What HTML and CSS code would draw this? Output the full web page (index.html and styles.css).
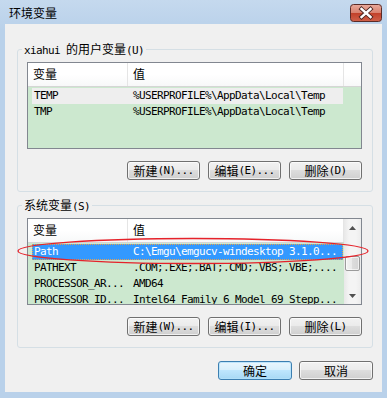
FILE: index.html
```html
<!DOCTYPE html>
<html lang="zh-CN">
<head>
<meta charset="utf-8">
<title>环境变量</title>
<link rel="stylesheet" href="styles.css">
</head>
<body>
<div class="window">
  <div class="titlebar">
    <span class="title">环境变量</span>
    <svg class="close" width="32" height="18" viewBox="0 0 32 18">
      <defs>
        <linearGradient id="cg" x1="0" y1="0" x2="0" y2="1">
          <stop offset="0" stop-color="#e9aa9c"/>
          <stop offset="0.48" stop-color="#d9826f"/>
          <stop offset="0.52" stop-color="#c2412a"/>
          <stop offset="1" stop-color="#d0614a"/>
        </linearGradient>
      </defs>
      <rect x="0.5" y="0.5" width="31" height="17" rx="3" fill="url(#cg)" stroke="#5a2b27"/>
      <path d="M11.5 5 L20.5 13 M20.5 5 L11.5 13" stroke="#4a2420" stroke-width="4.2" stroke-linecap="square"/>
      <path d="M11.5 5 L20.5 13 M20.5 5 L11.5 13" stroke="#ffffff" stroke-width="2.4" stroke-linecap="square"/>
    </svg>
  </div>
  <div class="client">
    <fieldset class="group">
      <legend><span class="a">xiahui </span>的用户变量<span class="a">(U)</span></legend>
      <div class="gbody">
        <div class="list">
          <div class="list-main">
            <div class="lhead">
              <div class="hc hc1">变量</div>
              <div class="hc hc2">值</div>
              <div class="hc hcf"></div>
            </div>
            <div class="lbody">
              <div class="row inactive"><span class="c1 a">TEMP</span><span class="c2 a">%USERPROFILE%\AppData\Local\Temp</span></div>
              <div class="row"><span class="c1 a">TMP</span><span class="c2 a">%USERPROFILE%\AppData\Local\Temp</span></div>
            </div>
          </div>
        </div>
        <div class="btns">
          <button class="btn">新建<span class="a">(N)...</span></button>
          <button class="btn">编辑<span class="a">(E)...</span></button>
          <button class="btn">删除<span class="a">(D)</span></button>
        </div>
      </div>
    </fieldset>

    <fieldset class="group group2">
      <legend>系统变量<span class="a">(S)</span></legend>
      <div class="gbody">
        <div class="list">
          <div class="list-main">
            <div class="lhead">
              <div class="hc hc1">变量</div>
              <div class="hc hc2">值</div>
            </div>
            <div class="lbody">
              <div class="row selected"><span class="c1 a">Path</span><span class="c2 a">C:\Emgu\emgucv-windesktop 3.1.0...</span></div>
              <div class="row"><span class="c1 a">PATHEXT</span><span class="c2 a">.COM;.EXE;.BAT;.CMD;.VBS;.VBE;....</span></div>
              <div class="row"><span class="c1 a">PROCESSOR_AR...</span><span class="c2 a">AMD64</span></div>
              <div class="row"><span class="c1 a">PROCESSOR_ID...</span><span class="c2 a">Intel64 Family 6 Model 69 Stepp...</span></div>
            </div>
          </div>
          <div class="sb">
            <div class="sb-btn"><svg width="7" height="4" viewBox="0 0 7 4"><path d="M0 4 L3.5 0 L7 4 Z" fill="#505050"/></svg></div>
            <div class="sb-track"><div class="sb-thumb"></div></div>
            <div class="sb-btn"><svg width="7" height="4" viewBox="0 0 7 4"><path d="M0 0 L7 0 L3.5 4 Z" fill="#505050"/></svg></div>
          </div>
        </div>
        <div class="btns">
          <button class="btn">新建<span class="a">(W)...</span></button>
          <button class="btn">编辑<span class="a">(I)...</span></button>
          <button class="btn">删除<span class="a">(L)</span></button>
        </div>
      </div>
    </fieldset>

    <div class="dlg-btns">
      <button class="btn wide default">确定</button>
      <button class="btn wide">取消</button>
    </div>
  </div>

  <svg class="mark" width="356" height="31" viewBox="0 0 356 31">
    <ellipse cx="177" cy="15" rx="175" ry="12.5" fill="none" stroke="#e5222a" stroke-width="1.3"/>
  </svg>
</div>
</body>
</html>
```

FILE: styles.css
```css
html, body {
  margin: 0;
  padding: 0;
}

body {
  background: #b9d1ea;
  font-family: "Noto Sans CJK SC", sans-serif;
  font-size: 12px;
  color: #000;
}

.window {
  position: relative;
  width: 387px;
  height: 398px;
  background: linear-gradient(#c5d9ee, #b9d1ea 30px, #b9d1ea);
  overflow: hidden;
}

.titlebar {
  height: 24px;
  display: flex;
  align-items: flex-start;
}

.title {
  margin: 5px 0 0 9px;
  font-size: 12px;
  line-height: 16px;
  color: #000;
}

.close {
  display: block;
  margin: 4px 5px 0 auto;
}

.client {
  margin: 0 5px;
  height: 368px;
  background: #f0f0f0;
  display: flex;
  flex-direction: column;
}

.a {
  font-family: "DejaVu Sans Mono", monospace;
  font-size: 11px;
  letter-spacing: -0.62px;
}

.group {
  margin: 18px 9px 0 12px;
  padding: 0;
  border: 1px solid #d5dfe5;
  border-radius: 3px;
  min-width: 0;
}

.group2 {
  margin-top: 6px;
}

.group legend {
  margin-left: 4px;
  padding: 0 2px;
  font-size: 12px;
  line-height: 14px;
  height: 14px;
}

.gbody {
  padding: 6px 10px 11px 9px;
}

.list {
  box-sizing: border-box;
  height: 87px;
  border: 1px solid #828790;
  background: #cce8cf;
  display: flex;
  overflow: hidden;
}

.list-main {
  flex: 1;
  min-width: 0;
}

.lhead {
  box-sizing: border-box;
  height: 24px;
  display: flex;
  background: linear-gradient(#ffffff, #ffffff 50%, #f7f8f9);
  border-bottom: 1px solid #d5d5d5;
}

.hc {
  box-sizing: border-box;
  height: 23px;
  line-height: 22px;
  padding-left: 5px;
  border-right: 1px solid #e5e5e5;
  font-size: 12px;
}

.hc1 {
  width: 100px;
}

.hc2 {
  width: 216px;
}

.hcf {
  flex: 1;
  border-right: none;
}

.lbody {
  padding-top: 1px;
}

.row {
  display: flex;
  width: 311px;
  height: 16px;
  margin-left: 4px;
  line-height: 16px;
  white-space: nowrap;
}

.row .c1 {
  box-sizing: border-box;
  width: 95px;
  padding-left: 2px;
  overflow: hidden;
}

.row .c2 {
  box-sizing: border-box;
  width: 216px;
  padding-left: 6px;
  overflow: hidden;
}

.row.inactive {
  background: #eeeeee;
}

.row.selected {
  background: #3399ff;
  color: #fff;
  outline: 1px dotted #e8a050;
  outline-offset: -1px;
}

.sb {
  width: 17px;
  display: flex;
  flex-direction: column;
  background: linear-gradient(90deg, #e8e8e8, #f4f4f4 30%, #f4f4f4 70%, #ececec);
}

.sb-btn {
  height: 17px;
  display: flex;
  align-items: center;
  justify-content: center;
}

.sb-track {
  flex: 1;
}

.sb-thumb {
  box-sizing: border-box;
  margin: 20px 1px 0 1px;
  height: 15px;
  border: 1px solid #9b9b9b;
  border-radius: 2px;
  background: linear-gradient(90deg, #f3f3f3, #e9e9e9 50%, #dcdcdc 50%, #d4d4d4);
  box-shadow: inset 0 0 0 1px rgba(255, 255, 255, 0.6);
}

.btns {
  display: flex;
  justify-content: flex-end;
  gap: 8px;
  margin-top: 12px;
}

.btn {
  box-sizing: border-box;
  width: 73px;
  height: 19px;
  padding: 0;
  margin: 0;
  border: 1px solid #707070;
  border-radius: 3px;
  background: linear-gradient(#f2f2f2, #ebebeb 45%, #dddddd 50%, #cfcfcf);
  box-shadow: inset 0 0 0 1px rgba(255, 255, 255, 0.7);
  font-family: "Noto Sans CJK SC", sans-serif;
  font-size: 12px;
  line-height: 17px;
  color: #000;
  display: flex;
  align-items: center;
  justify-content: center;
}

.btn.wide {
  width: 74px;
}

.btn.default {
  border-color: #3c7fb1;
  background: linear-gradient(#eaf6fd, #d9f0fc 45%, #bee6fd 50%, #a7d9f5);
  box-shadow: inset 0 0 0 1px rgba(180, 225, 250, 0.8);
}

.dlg-btns {
  display: flex;
  justify-content: flex-end;
  gap: 7px;
  margin: 13px 9px 0 0;
}

.mark {
  position: absolute;
  left: 16px;
  top: 236px;
}
```
